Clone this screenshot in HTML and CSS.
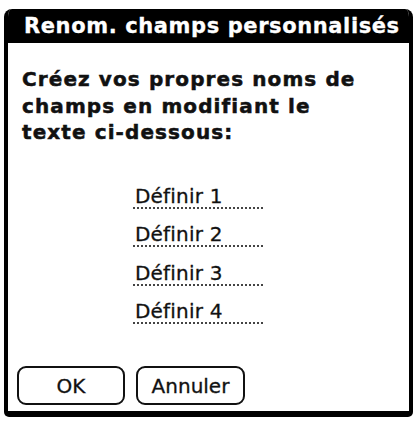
FILE: index.html
```html
<!DOCTYPE html>
<html lang="fr">
<head>
<meta charset="utf-8">
<title>Renom. champs personnalisés</title>
<link rel="stylesheet" href="styles.css">
</head>
<body>
<div class="dialog">
  <div class="title">Renom. champs personnalisés</div>
  <div class="content">
    <p class="prompt">Créez vos propres noms de<br>champs en modifiant le<br>texte ci-dessous:</p>
    <div class="fields">
      <div class="field">Définir 1</div>
      <div class="field">Définir 2</div>
      <div class="field">Définir 3</div>
      <div class="field">Définir 4</div>
    </div>
    <div class="buttons">
      <button class="btn btn-ok">OK</button>
      <button class="btn btn-cancel">Annuler</button>
    </div>
  </div>
</div>
</body>
</html>
```
FILE: styles.css
```css
html, body {
  margin: 0;
  padding: 0;
  background: #fff;
}
body {
  width: 417px;
  height: 423px;
  overflow: hidden;
  font-family: "DejaVu Sans", Verdana, sans-serif;
  color: #111;
}
.dialog {
  margin: 9px 0 0 4px;
  width: 409px;
  height: 408px;
  box-sizing: border-box;
  border: 4px solid #000;
  border-top: 0;
  border-bottom-width: 6px;
  border-radius: 8px 8px 5px 5px;
  display: flex;
  flex-direction: column;
  overflow: hidden;
}
.title {
  background: #000;
  color: #fff;
  height: 34px;
  line-height: 35px;
  font-weight: bold;
  font-size: 21px;
  letter-spacing: 0.6px;
  padding-left: 16px;
  white-space: nowrap;
  flex: none;
  -webkit-text-stroke: 0.3px #fff;
}
.content {
  flex: 1;
  display: flex;
  flex-direction: column;
  padding: 0 0 6px 0;
}
.prompt {
  margin: 23px 0 0 14px;
  font-weight: bold;
  font-size: 20px;
  letter-spacing: 1.1px;
  line-height: 26.5px;
  white-space: nowrap;
  -webkit-text-stroke: 0.5px #111;
}
.fields {
  margin: 39px 0 0 125px;
}
.field {
  width: 130px;
  padding-left: 2px;
  box-sizing: border-box;
  font-size: 20px;
  letter-spacing: 0.2px;
  line-height: 22px;
  border-bottom: 2px dotted #444;
  margin-bottom: 14.5px;
  white-space: nowrap;
  -webkit-text-stroke: 0.3px #111;
}
.buttons {
  margin-top: auto;
  display: flex;
  gap: 11px;
  padding-left: 9px;
}
.btn {
  box-sizing: border-box;
  height: 39px;
  border: 2px solid #111;
  border-radius: 9px;
  background: #fff;
  font-family: "DejaVu Sans", Verdana, sans-serif;
  font-size: 20px;
  color: #111;
  padding: 0;
  -webkit-text-stroke: 0.3px #111;
}
.btn-ok { width: 108px; }
.btn-cancel { width: 109px; }
```
